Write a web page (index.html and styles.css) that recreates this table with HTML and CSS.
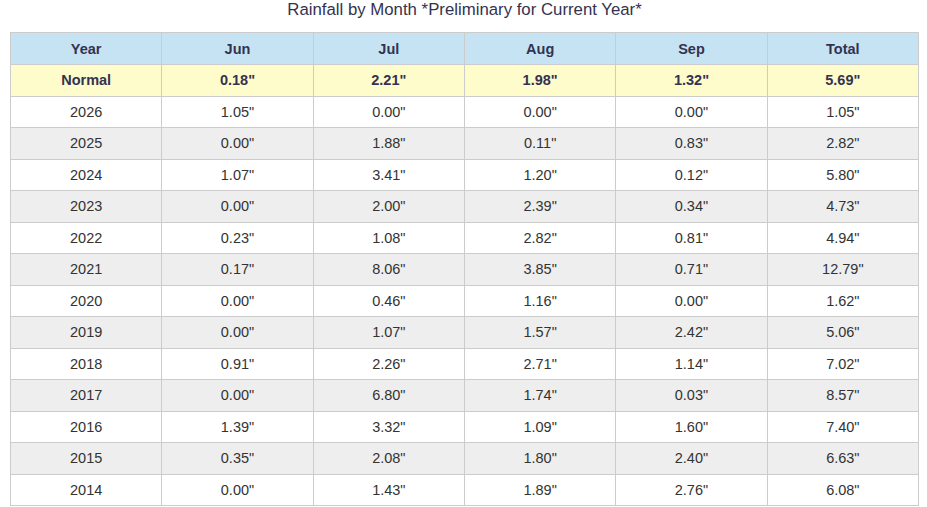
FILE: index.html
```html
<!DOCTYPE html>
<html>
<head>
<meta charset="utf-8">
<link rel="stylesheet" href="styles.css">
</head>
<body>
<div class="page">
  <div class="title">Rainfall by Month *Preliminary for Current Year*</div>
  <table class="rain">
    <thead>
      <tr><th>Year</th><th>Jun</th><th>Jul</th><th>Aug</th><th>Sep</th><th>Total</th></tr>
    </thead>
    <tbody>
      <tr class="normal"><td>Normal</td><td>0.18"</td><td>2.21"</td><td>1.98"</td><td>1.32"</td><td>5.69"</td></tr>
      <tr><td>2026</td><td>1.05"</td><td>0.00"</td><td>0.00"</td><td>0.00"</td><td>1.05"</td></tr>
      <tr><td>2025</td><td>0.00"</td><td>1.88"</td><td>0.11"</td><td>0.83"</td><td>2.82"</td></tr>
      <tr><td>2024</td><td>1.07"</td><td>3.41"</td><td>1.20"</td><td>0.12"</td><td>5.80"</td></tr>
      <tr><td>2023</td><td>0.00"</td><td>2.00"</td><td>2.39"</td><td>0.34"</td><td>4.73"</td></tr>
      <tr><td>2022</td><td>0.23"</td><td>1.08"</td><td>2.82"</td><td>0.81"</td><td>4.94"</td></tr>
      <tr><td>2021</td><td>0.17"</td><td>8.06"</td><td>3.85"</td><td>0.71"</td><td>12.79"</td></tr>
      <tr><td>2020</td><td>0.00"</td><td>0.46"</td><td>1.16"</td><td>0.00"</td><td>1.62"</td></tr>
      <tr><td>2019</td><td>0.00"</td><td>1.07"</td><td>1.57"</td><td>2.42"</td><td>5.06"</td></tr>
      <tr><td>2018</td><td>0.91"</td><td>2.26"</td><td>2.71"</td><td>1.14"</td><td>7.02"</td></tr>
      <tr><td>2017</td><td>0.00"</td><td>6.80"</td><td>1.74"</td><td>0.03"</td><td>8.57"</td></tr>
      <tr><td>2016</td><td>1.39"</td><td>3.32"</td><td>1.09"</td><td>1.60"</td><td>7.40"</td></tr>
      <tr><td>2015</td><td>0.35"</td><td>2.08"</td><td>1.80"</td><td>2.40"</td><td>6.63"</td></tr>
      <tr><td>2014</td><td>0.00"</td><td>1.43"</td><td>1.89"</td><td>2.76"</td><td>6.08"</td></tr>
    </tbody>
  </table>
</div>
</body>
</html>
```
FILE: styles.css
```css
html, body {
  margin: 0;
  padding: 0;
  background: #ffffff;
}
.page {
  padding: 0 8px 0 10px;
  font-family: "Liberation Sans", Arial, sans-serif;
  color: #333333;
}
.title {
  text-align: center;
  font-size: 16.8px;
  line-height: 20px;
  color: #33334f;
  margin-bottom: 12px;
}
.rain {
  width: 100%;
  border-collapse: collapse;
  table-layout: fixed;
  font-size: 14.5px;
}
.rain th, .rain td {
  border: 1px solid #cccccc;
  text-align: center;
  padding: 0;
  line-height: 16px;
}
.rain th {
  height: 31px;
  background: #c6e3f4;
  color: #33334f;
  font-weight: bold;
}
.rain td {
  height: 30.5px;
  color: #333333;
}
.rain tbody tr:nth-child(even) td {
  background: #ffffff;
}
.rain tbody tr:nth-child(odd) td {
  background: #eeeeee;
}
.rain tbody tr.normal td {
  background: #fffccc;
  font-weight: bold;
  color: #33334f;
}
```
